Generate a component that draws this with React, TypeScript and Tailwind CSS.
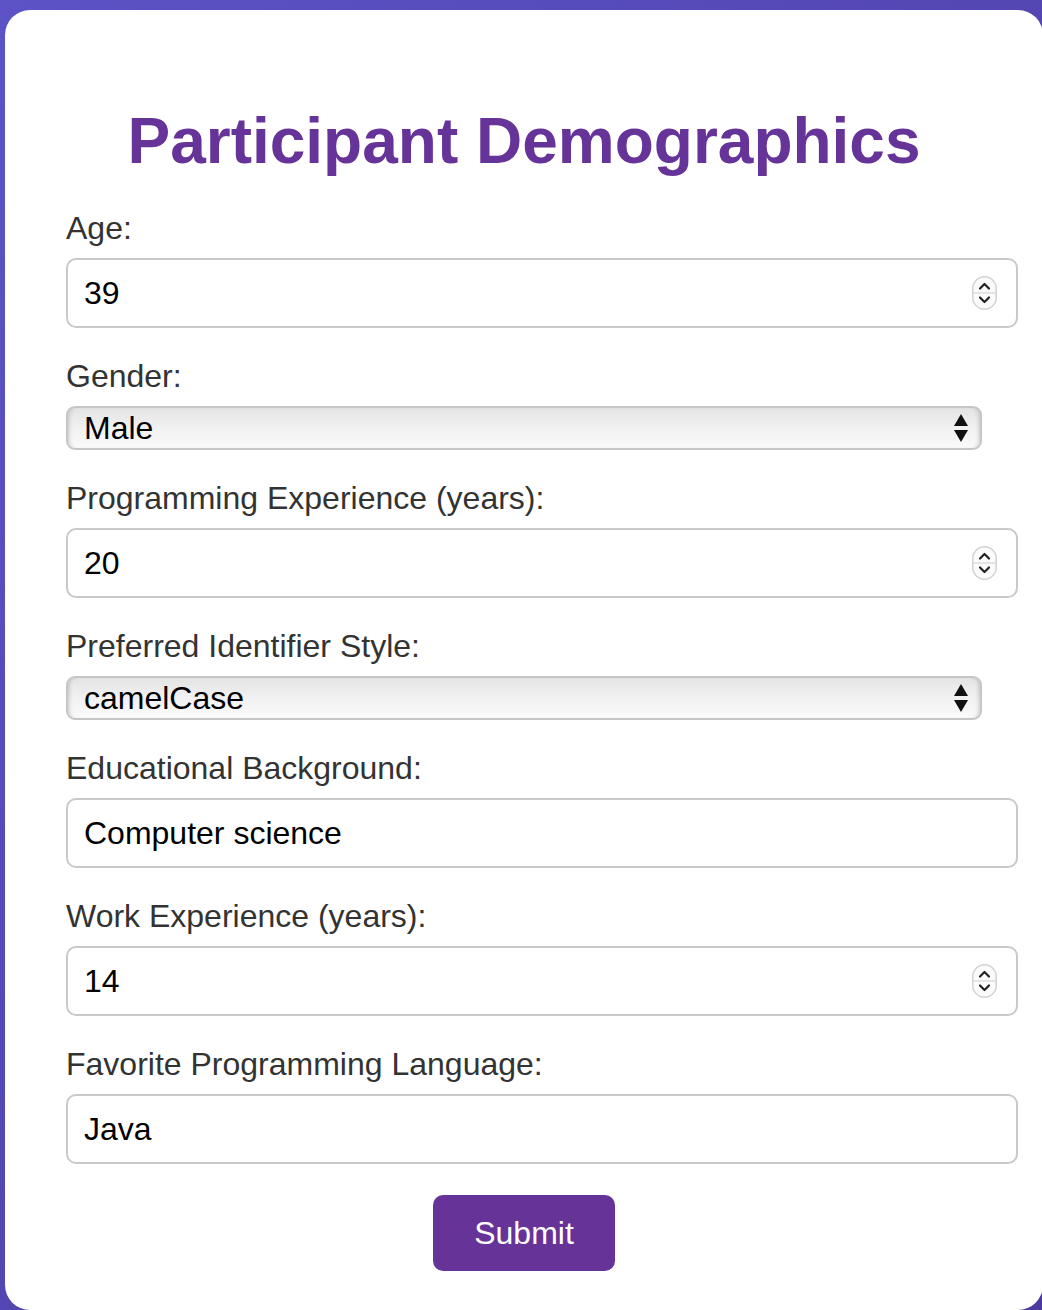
import React from 'react';

// Small up/down stepper drawn over number-like inputs
const Stepper = () => (
  <svg
    className="pointer-events-none absolute right-[21px] top-1/2 -translate-y-1/2"
    width="25"
    height="34"
    viewBox="0 0 25 34">
    <rect x="0.75" y="0.75" width="23.5" height="32.5" rx="11.75" fill="#fbfbfb" stroke="#d2d2d2" strokeWidth="1.5" />
    <line x1="1" y1="17" x2="24" y2="17" stroke="#dcdcdc" strokeWidth="1.5" />
    <path d="M8 12.5 L12.5 8 L17 12.5" fill="none" stroke="#222" strokeWidth="2.2" strokeLinecap="round" strokeLinejoin="round" />
    <path d="M8 21.5 L12.5 26 L17 21.5" fill="none" stroke="#222" strokeWidth="2.2" strokeLinecap="round" strokeLinejoin="round" />
  </svg>
);

interface FieldProps {
  label: string;
  value: string;
  stepper?: boolean;
}

const TextField = ({ label, value, stepper }: FieldProps) => (
  <div className="mb-[30px] flex flex-col">
    <label className="mb-[11px] text-[32px] leading-[37px] text-[#333]">{label}</label>
    <div className="relative w-[952px]">
      <input
        type="text"
        defaultValue={value}
        className="h-[70px] w-full rounded-[10px] border-2 border-[#c9c9c9] bg-white pl-[16px] text-[32px] text-black outline-none"
      />
      {stepper && <Stepper />}
    </div>
  </div>
);

interface SelectProps {
  label: string;
  value: string;
  options: string[];
}

const SelectField = ({ label, value, options }: SelectProps) => (
  <div className="mb-[30px] flex flex-col">
    <label className="mb-[11px] text-[32px] leading-[37px] text-[#333]">{label}</label>
    <div className="relative w-[916px]">
      <select
        defaultValue={value}
        className="h-[44px] w-full appearance-none rounded-[9px] border-2 border-[#c6c6c6] bg-gradient-to-b from-[#e4e4e4] via-[#f1f1f1] to-[#fafafa] pl-[16px] text-[32px] leading-[40px] text-black shadow-[inset_4px_0_4px_-3px_rgba(0,0,0,0.18),inset_-4px_0_4px_-3px_rgba(0,0,0,0.18)] outline-none">
        {options.map((o) => (
          <option key={o}>{o}</option>
        ))}
      </select>
      <svg
        className="pointer-events-none absolute right-[13px] top-1/2 -translate-y-1/2"
        width="16"
        height="30"
        viewBox="0 0 16 30">
        <path d="M8 1 L15 13 L1 13 Z" fill="#111" />
        <path d="M1 17 L15 17 L8 29 Z" fill="#111" />
      </svg>
    </div>
  </div>
);

export default function App() {
  return (
    <div
      className="h-[1310px] w-[1042px] overflow-hidden bg-gradient-to-br from-[#5b53c6] to-[#4c3aa0] pl-[5px] pt-[10px]"
      style={{ fontFamily: '"Liberation Sans", Arial, Helvetica, sans-serif' }}>
      <div className="h-[1300px] w-[1038px] rounded-[25px] bg-white px-[61px] pt-[94px]">
        <h1 className="mb-[32px] text-center text-[64px] font-bold leading-[74px] text-[#663399]">
          Participant Demographics
        </h1>
        <form className="flex flex-col" onSubmit={(e) => e.preventDefault()}>
          <TextField label="Age:" value="39" stepper />
          <SelectField label="Gender:" value="Male" options={['Male', 'Female', 'Other']} />
          <TextField label="Programming Experience (years):" value="20" stepper />
          <SelectField
            label="Preferred Identifier Style:"
            value="camelCase"
            options={['camelCase', 'snake_case', 'PascalCase']}
          />
          <TextField label="Educational Background:" value="Computer science" />
          <TextField label="Work Experience (years):" value="14" stepper />
          <div className="-mb-[30px]">
            <TextField label="Favorite Programming Language:" value="Java" />
          </div>
          <div className="mt-[31px] flex justify-center">
            <button
              type="submit"
              className="h-[76px] w-[182px] rounded-[10px] bg-[#663399] text-[32px] text-white">
              Submit
            </button>
          </div>
        </form>
      </div>
    </div>
  );
}
